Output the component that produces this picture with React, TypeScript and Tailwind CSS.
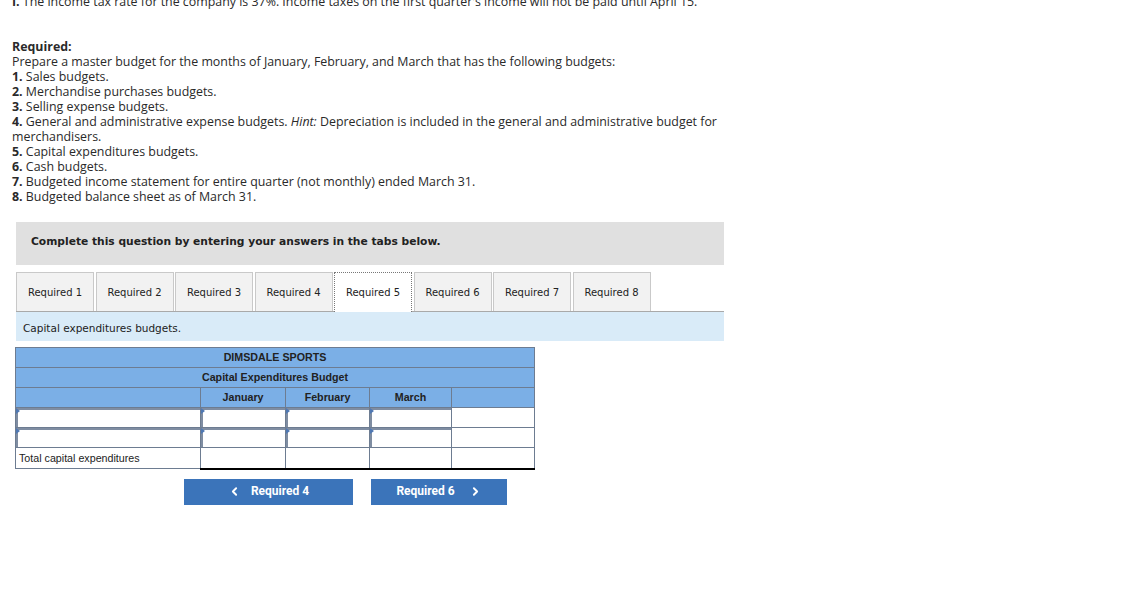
import React from 'react';
import { ChevronLeft, ChevronRight } from 'lucide-react';

const body = { fontFamily: '"Open Sans", Lato, sans-serif' };
const verdana = { fontFamily: '"DejaVu Sans", Verdana, sans-serif' };
const arial = { fontFamily: '"Liberation Sans", Arial, sans-serif' };
const roboto = { fontFamily: 'Roboto, "Liberation Sans", sans-serif' };

const items: { n: string; text: React.ReactNode }[] = [
  { n: '1.', text: 'Sales budgets.' },
  { n: '2.', text: 'Merchandise purchases budgets.' },
  { n: '3.', text: 'Selling expense budgets.' },
  {
    n: '4.',
    text: (
      <>
        General and administrative expense budgets. <i>Hint:</i> Depreciation is included in the general and
        administrative budget for merchandisers.
      </>
    ),
  },
  { n: '5.', text: 'Capital expenditures budgets.' },
  { n: '6.', text: 'Cash budgets.' },
  { n: '7.', text: 'Budgeted income statement for entire quarter (not monthly) ended March 31.' },
  { n: '8.', text: 'Budgeted balance sheet as of March 31.' },
];

const tabs = ['Required 1', 'Required 2', 'Required 3', 'Required 4', 'Required 5', 'Required 6', 'Required 7', 'Required 8'];

/** Input cell with the little blue marker in the top-left corner */
function InputCell({ w }: { w: string }) {
  return (
    <td className={`relative h-[20px] border border-[#6d7c91] bg-white p-0 ${w}`}>
      <div className="absolute inset-0 border-t-2 border-l-2 border-[#7f8da2]" />
      <div className="absolute left-0 top-0 h-0 w-0 border-y-[3px] border-l-[4px] border-y-transparent border-l-[#4f78b3]" />
    </td>
  );
}

export default function App() {
  return (
    <div className="min-h-screen bg-white pl-3 text-[12.4px] leading-[15px] text-[#2a2a2a]" style={body}>
      <p className="-mt-[6px] whitespace-nowrap">
        <b>I.</b> The income tax rate for the company is 37%. Income taxes on the first quarter's income will not be paid
        until April 15.
      </p>

      <div className="mt-[30px] w-[716px]">
        <p className="font-bold">Required:</p>
        <p>Prepare a master budget for the months of January, February, and March that has the following budgets:</p>
        {items.map((it) => (
          <p key={it.n}>
            <b>{it.n}</b> {it.text}
          </p>
        ))}
      </div>

      <div className="ml-1 w-[708px]">
        <div
          className="mt-[18px] flex h-[43px] items-center bg-[#e0e0e0] pb-[5px] pl-[15px] text-[10.7px] font-bold text-[#222]"
          style={verdana}
        >
          Complete this question by entering your answers in the tabs below.
        </div>

        <div className="mt-[7px] flex gap-[1.5px] border-b border-[#a9a9a9]" style={verdana}>
          {tabs.map((t, i) =>
            i === 4 ? (
              <div
                key={t}
                className="-mb-px flex h-[40px] w-[78px] items-center justify-center border border-b-0 border-dotted border-[#777] bg-white text-[10px] text-[#222]"
              >
                {t}
              </div>
            ) : (
              <div
                key={t}
                className="flex h-[39px] w-[78px] items-center justify-center border border-b-0 border-[#c9c9c9] bg-[#f2f2f2] text-[10px] text-[#222]"
              >
                {t}
              </div>
            )
          )}
        </div>

        <div className="flex h-[29px] items-center bg-[#d9ebf8] pl-[7px] pt-[3px] text-[10.5px] text-[#222]" style={verdana}>
          Capital expenditures budgets.
        </div>

        <table className="-ml-px mt-[6px] w-[520px] border-collapse text-[10.7px] text-[#222]" style={arial}>
          <tbody>
            <tr className="h-[20px] bg-[#7bafe6] font-bold">
              <td colSpan={5} className="border border-[#6d7c91] text-center">
                DIMSDALE SPORTS
              </td>
            </tr>
            <tr className="h-[20px] bg-[#7bafe6] font-bold">
              <td colSpan={5} className="border border-[#6d7c91] text-center">
                Capital Expenditures Budget
              </td>
            </tr>
            <tr className="h-[20px] bg-[#7bafe6] font-bold">
              <td className="w-[185px] border border-[#6d7c91]" />
              <td className="w-[85px] border border-[#6d7c91] text-center">January</td>
              <td className="w-[84px] border border-[#6d7c91] text-center">February</td>
              <td className="w-[82px] border border-[#6d7c91] text-center">March</td>
              <td className="border border-[#6d7c91]" />
            </tr>
            {[0, 1].map((r) => (
              <tr key={r}>
                <InputCell w="w-[185px]" />
                <InputCell w="w-[85px]" />
                <InputCell w="w-[84px]" />
                <InputCell w="w-[82px]" />
                <td className="h-[20px] border border-[#6d7c91] bg-white" />
              </tr>
            ))}
            <tr className="h-[21px]">
              <td className="border border-[#6d7c91] pl-[3px]">Total capital expenditures</td>
              <td className="border-x border-t border-b-2 border-x-[#6d7c91] border-t-black border-b-black" />
              <td className="border-x border-t border-b-2 border-x-[#6d7c91] border-t-black border-b-black" />
              <td className="border-x border-t border-b-2 border-x-[#6d7c91] border-t-black border-b-black" />
              <td className="border-x border-t border-b-2 border-x-[#6d7c91] border-t-black border-b-black" />
            </tr>
          </tbody>
        </table>

        <div className="mt-[9px] flex text-[12px] font-bold text-white" style={roboto}>
          <button className="ml-[168px] flex h-[26px] w-[169px] items-center justify-center gap-[10px] bg-[#3b74ba]">
            <ChevronLeft size={13} strokeWidth={3.5} />
            <span>Required 4</span>
          </button>
          <button className="ml-[18px] flex h-[26px] w-[136px] items-center justify-center gap-[14px] bg-[#3b74ba]">
            <span>Required 6</span>
            <ChevronRight size={13} strokeWidth={3.5} />
          </button>
        </div>
      </div>
    </div>
  );
}
